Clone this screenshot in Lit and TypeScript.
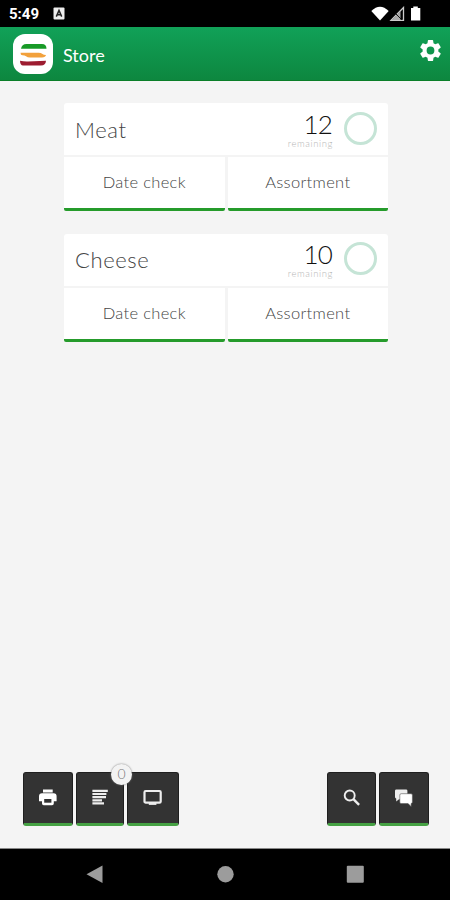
import { LitElement, html, svg, css } from "lit";
import { customElement, property } from "lit/decorators.js";

const icons = {
  print: svg`<path d="M5 1.500h9.700v3H5zM4 5.300h11.600a3 3 0 0 1 3 3v5h-2.800v2.300q0 1.700-1.700 1.700H5.700Q4 17.300 4 15.600v-2.300H1v-5a3 3 0 0 1 3-3z" fill="#fff"/><path d="M6.200 11h7.200v3.700H6.200z" fill="#333"/>`,
  list: svg`<path d="M2.400 2.800h15.400M2.400 6h14M2.400 9.200h13.600M2.400 12.400h9.600M2.400 15.400h11.600" stroke="#eee" stroke-width="2.200" fill="none"/>`,
  screen: svg`<rect x="1.500" y="3" width="16.200" height="11.600" rx="1.200" fill="none" stroke="#eee" stroke-width="2.200"/><path d="M5.800 14.600h7.600v2.300H5.800z" fill="#eee"/>`,
  search: svg`<circle cx="7.700" cy="7.500" r="5" fill="none" stroke="#eee" stroke-width="1.900"/><path d="M11.400 11.200l5.700 5.700" stroke="#eee" stroke-width="2.400"/>`,
  chat: svg`<path d="M2.400 1.400h9.600q1.400 0 1.400 1.400v7q0 1.400-1.400 1.400H5l-2.800 2.200V10.600Q1 10.200 1 9V2.800q0-1.400 1.400-1.400z" fill="#eee"/><path d="M7.200 5.700h9.800q1.400 0 1.400 1.400v7q0 1.300-1.300 1.500v3l-3-3H7.200q-1.400 0-1.400-1.400V7.100q0-1.400 1.400-1.400z" fill="#fff" stroke="#555" stroke-width=".6"/>`,
};

@customElement("store-section")
class StoreSection extends LitElement {
  @property() name = "";
  @property({ type: Number }) count = 0;
  static styles = css`
    :host { display: block; width: 324px; color: #444; }
    .top { height: 52px; background: #fff; border-radius: 3px 3px 0 0; display: flex; align-items: center; box-sizing: border-box; padding: 0 11px; }
    .name { flex: 1; font-size: 22px; line-height: 51px; font-weight: 300; letter-spacing: .6px; }
    .left { display: flex; flex-direction: column; align-items: flex-end; margin: 0 11px 0 0; }
    .num { font-size: 26px; line-height: 28px; font-weight: 300; color: #111; letter-spacing: -.8px; margin-right: 1px; }
    .rem { font-size: 9.5px; line-height: 11px; height: 11px; color: #b5b5b5; font-weight: 300; letter-spacing: .6px; }
    .ring { width: 27px; height: 27px; border: 3px solid #c5e4d6; border-radius: 50%; margin-bottom: 2px; }
    .row { display: grid; grid-template-columns: 160.5px 160.5px; gap: 3px; margin-top: 2px; }
    .tab { height: 54px; box-sizing: border-box; background: #fff; border-bottom: 3px solid #259b2b; border-radius: 0 0 2px 2px; text-align: center; font-size: 16.5px; line-height: 51px; font-weight: 300; letter-spacing: .32px; }
  `;
  render() {
    return html`<div class="top">
        <div class="name">${this.name}</div>
        <div class="left"><div class="num">${this.count}</div><div class="rem">remaining</div></div>
        <div class="ring"></div>
      </div>
      <div class="row"><div class="tab">Date check</div><div class="tab">Assortment</div></div>`;
  }
}

@customElement("tool-button")
class ToolButton extends LitElement {
  @property() icon: keyof typeof icons = "print";
  @property() badge = "";
  static styles = css`
    :host { display: block; position: relative; height: 54px; box-sizing: border-box; background: #333; border-radius: 3px; border: 1px solid #1f1f1f; border-bottom: 3px solid #45a143; }
    .face { height: 100%; display: flex; align-items: center; justify-content: center; }
    svg { width: 20px; height: 20px; }
    .badge { position: absolute; right: -9px; top: -9px; width: 21px; height: 21px; border-radius: 50%; background: #f3f3f3; box-shadow: 0 0 2px #777; color: #777; font-size: 14px; font-weight: 300; line-height: 20px; text-align: center; z-index: 1; }
  `;
  render() {
    return html`<div class="face"><svg viewBox="0 0 20 20">${icons[this.icon]}</svg></div>
      ${this.badge ? html`<div class="badge">${this.badge}</div>` : ""}`;
  }
}

@customElement("app-root")
class AppRoot extends LitElement {
  static styles = css`
    :host { display: flex; flex-direction: column; width: 450px; height: 900px; background: #f4f4f4; font-family: Lato, "Open Sans", sans-serif; overflow: hidden; }
    .status { height: 27px; background: #000; color: #fff; display: flex; align-items: center; box-sizing: border-box; padding: 0 29px 0 9px; }
    .time { font: 700 15px/28px Roboto, sans-serif; width: 44px; }
    .status svg { display: block; }
    .grow { flex: 1; }
    .head { height: 54px; box-sizing: border-box; background: linear-gradient(#11a158, #0d873f); border-bottom: 1px solid #0a7e28; display: flex; align-items: center; padding: 0 9px 0 13px; }
    .logo { width: 40px; height: 40px; border-radius: 12px; background: #fff; margin-right: 10px; }
    .title { color: #fff; font-size: 18px; line-height: 54px; flex: 1; margin-top: 3px; }
    .gear { margin-bottom: 6px; }
    .main { flex: 1; display: flex; flex-direction: column; padding: 22px 0 0 64px; gap: 22.5px; }
    .tools { display: flex; padding: 0 21px 22px 23px; gap: 3px; }
    .w50 { width: 50px; } .w48 { width: 48px; } .w52 { width: 52px; } .w49 { width: 49px; }
    .nav { height: 52px; box-sizing: border-box; border-top: 1px solid #888; background: #000; }
    .nav svg { display: block; }
  `;
  render() {
    return html`
      <div class="status">
        <div class="time">5:49</div>
        <svg width="12" height="13" viewBox="0 0 12 13"><rect x=".5" y=".5" width="11" height="12" rx="1" fill="#eee"/><path d="M3.3 9.6L6 3.4l2.7 6.2M4.2 7.8h3.6" stroke="#222" stroke-width="1.5" fill="none"/></svg>
        <div class="grow"></div>
        <svg width="50" height="16" viewBox="371 6 50 16"><path d="M371.300 11q8.700-8.500 17.400 0L380 20.500z" fill="#fff"/><path d="M403.500 7.500v12.800H391z" fill="none" stroke="#ccc" stroke-width="1.300"/><path d="M400.500 11v9H392z" fill="#aaa"/><path d="M396 14l6 6" stroke="#111"/><path d="M413.300 6.500h4.500V8h2.500v12.500h-9.300V8h2.300z" fill="#fff"/></svg>
      </div>
      <div class="head">
        <div class="logo"><svg width="40" height="40" viewBox="0 0 40 40">
          <path d="M8 14.700q.7-4.700 5.500-4.700H29q4.500 0 4.500 4.700z" fill="#189a27"/>
          <path d="M7.500 18.700h18q2.500 0 4 1.400 1.200 1 3.500 1-.5 2.400-4 2.400H17q-2.500 0-4-1.300-1.300-1-3.500-1-2 0-2-2.500z" fill="#f2a13c"/>
          <path d="M7 26.700q4 1 8 .8l18-.8q-.3 4.800-5 4.800H10Q7.200 31.500 7 26.700z" fill="#9d1c30"/></svg></div>
        <div class="title">Store</div>
        <svg class="gear" width="21" height="21" viewBox="2 2 20 20"><path fill="#fff" d="M19.430 12.980c.04-.320.070-.640.070-.980s-.030-.660-.070-.980l2.110-1.650c.19-.150.240-.420.120-.640l-2-3.460c-.120-.220-.390-.300-.610-.220l-2.490 1c-.520-.400-1.080-.730-1.690-.980l-.380-2.650A.488.488 0 0 0 14 2h-4c-.250 0-.460.180-.490.420l-.380 2.650c-.610.250-1.170.590-1.690.980l-2.490-1c-.230-.090-.490 0-.610.220l-2 3.460c-.130.220-.070.490.120.640l2.110 1.650c-.040.320-.070.650-.070.980s.030.660.070.980l-2.110 1.650c-.190.150-.240.420-.120.640l2 3.460c.120.220.390.300.610.220l2.490-1c.520.400 1.080.730 1.690.980l.380 2.650c.030.240.240.420.490.420h4c.250 0 .460-.180.490-.420l.380-2.650c.610-.250 1.170-.590 1.690-.980l2.490 1c.230.090.490 0 .610-.220l2-3.460c.120-.220.070-.490-.120-.640zM12 15.700a3.700 3.700 0 1 1 0-7.400 3.700 3.700 0 0 1 0 7.400z"/></svg>
      </div>
      <div class="main">
        <store-section name="Meat" .count=${12}></store-section>
        <store-section name="Cheese" .count=${10}></store-section>
      </div>
      <div class="tools">
        <tool-button class="w50" icon="print"></tool-button>
        <tool-button class="w48" icon="list" badge="0"></tool-button>
        <tool-button class="w52" icon="screen"></tool-button>
        <div class="grow"></div>
        <tool-button class="w49" icon="search"></tool-button>
        <tool-button class="w50" icon="chat"></tool-button>
      </div>
      <div class="nav"><svg width="450" height="51" viewBox="0 849 450 51" fill="#9c9c9c"><path d="M86.500 874.300L102.500 865.500v17.500z"/><circle cx="225.500" cy="874.300" r="8.200"/><rect x="346.800" y="865.800" width="17" height="17" rx="1"/></svg></div>`;
  }
}
